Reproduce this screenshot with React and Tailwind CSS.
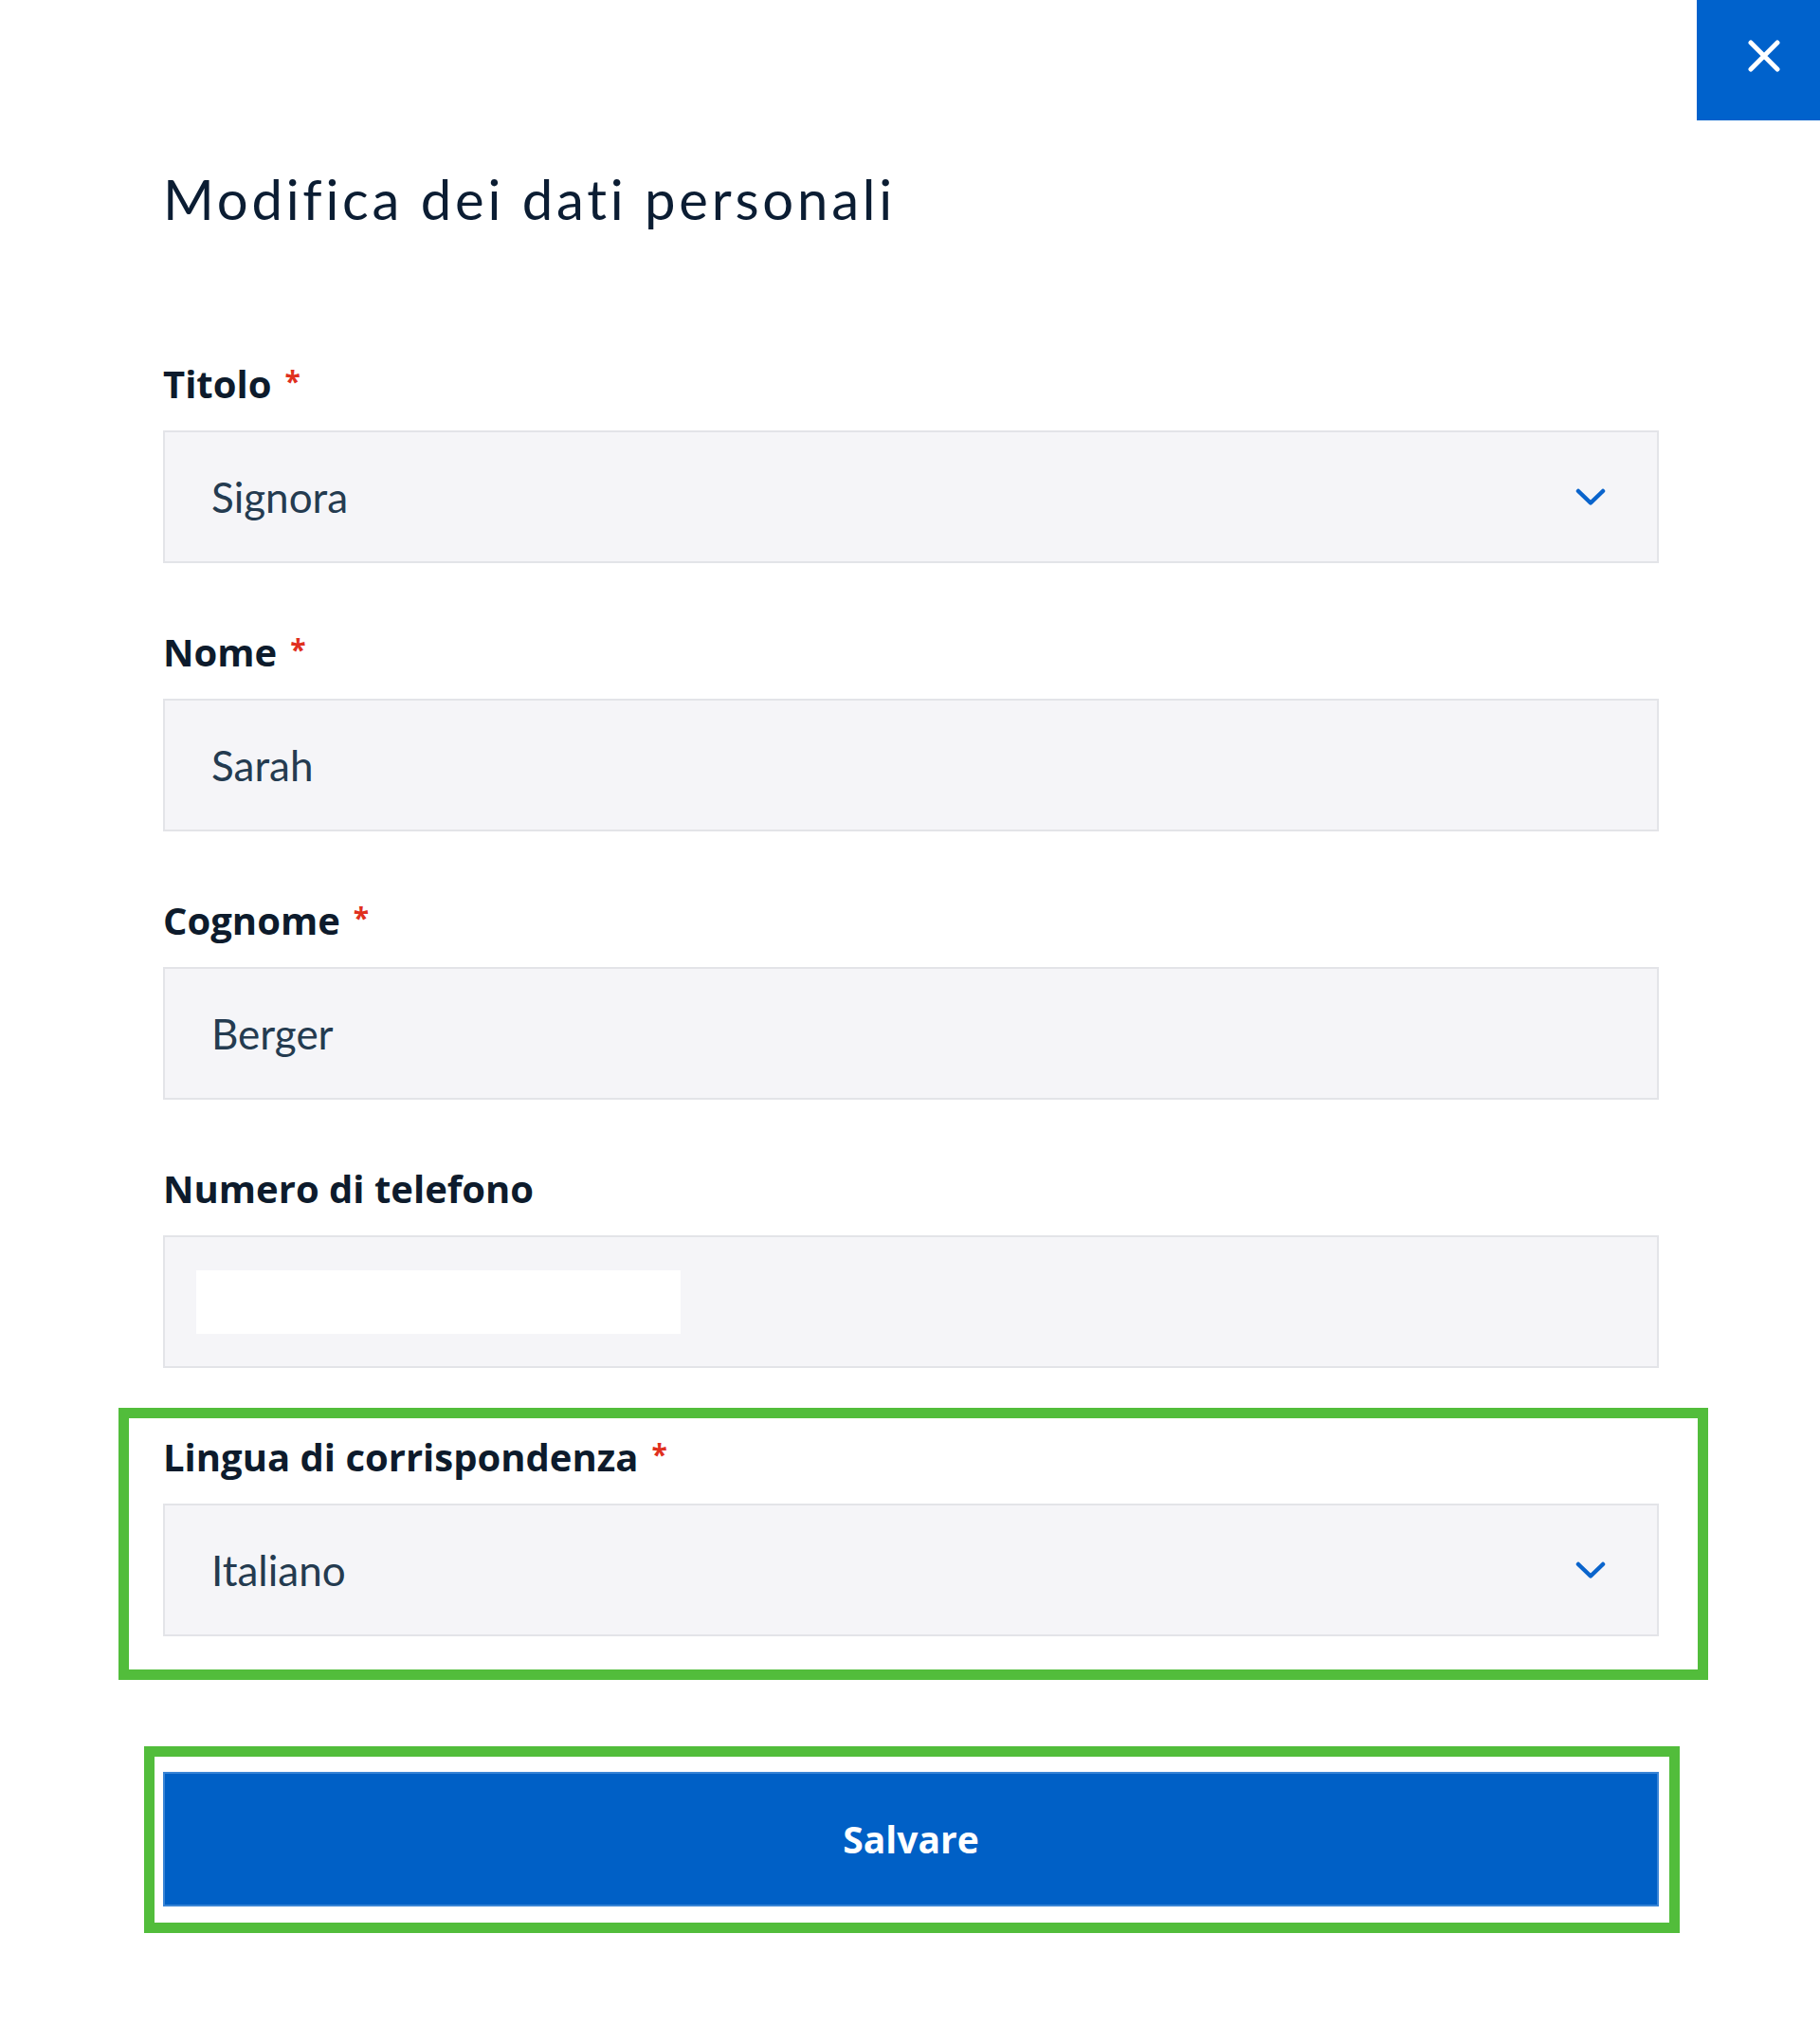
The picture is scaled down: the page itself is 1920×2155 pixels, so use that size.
import React from 'react';

const fields = [
  { label: 'Titolo', value: 'Signora', required: true, select: true },
  { label: 'Nome', value: 'Sarah', required: true },
  { label: 'Cognome', value: 'Berger', required: true },
  { label: 'Numero di telefono', value: '', required: false, phone: true },
];

const Chevron = () => (
  <svg width="32" height="19" viewBox="0 0 32 19" fill="none" className="mr-[54px]">
    <polyline
      points="3,3 16,15.5 29,3"
      stroke="#0a64cc"
      strokeWidth="4.5"
      strokeLinecap="round"
      strokeLinejoin="round"
    />
  </svg>
);

const Label = ({ text, required }) => (
  <div className="mb-[25px] flex items-start pt-[3px] text-[40px] font-bold leading-[48px] text-[#0d1b2c] [font-family:'Open_Sans',sans-serif]">
    <span>{text}</span>
    {required && <span className="ml-[14px] text-[30px] leading-[42px] text-[#e0301e]">*</span>}
  </div>
);

const Field = ({ label, value, required, select, phone }) => (
  <div>
    <Label text={label} required={required} />
    <div className="flex h-[140px] items-center justify-between border-2 border-[#e3e4e8] bg-[#f5f5f8] pl-[49px] text-[44px] text-[#243b50] [font-family:Lato,sans-serif]">
      {phone ? (
        <div className="-ml-[16px] h-[67px] w-[511px] bg-white" />
      ) : (
        <span>{value}</span>
      )}
      {select && <Chevron />}
    </div>
  </div>
);

export default function App() {
  return (
    <div className="relative min-h-[2155px] w-full bg-white">
      {/* close */}
      <button className="absolute right-0 top-0 flex h-[127px] w-[130px] items-center justify-center bg-[#0062cc] pb-[10px] pl-[12px]">
        <svg width="34" height="34" viewBox="0 0 34 34" fill="none">
          <path d="M3 3 L31 31 M31 3 L3 31" stroke="white" strokeWidth="5" strokeLinecap="round" />
        </svg>
      </button>

      <div className="ml-[172px] w-[1578px] pt-[181px]">
        <h1 className="mb-[139px] text-[58px] font-normal leading-[58px] tracking-[0.065em] text-[#0b1d33] [font-family:Lato,sans-serif]">
          Modifica dei dati personali
        </h1>

        <div className="flex flex-col gap-[67px]">
          {fields.map((f) => (
            <Field key={f.label} {...f} />
          ))}

          {/* highlighted field */}
          <div className="relative">
            <div className="pointer-events-none absolute -bottom-[46px] -left-[47px] -right-[52px] -top-[25px] border-[11px] border-[#52bd3b]" />
            <Field label="Lingua di corrispondenza" value="Italiano" required select />
          </div>
        </div>

        <div className="relative mt-[143px]">
          <div className="pointer-events-none absolute -bottom-[28px] -left-[20px] -right-[22px] -top-[27px] border-[11px] border-[#52bd3b]" />
          <button className="flex h-[142px] w-full items-center justify-center border-2 border-[#3a85d6] bg-[#0060c6] text-[39px] font-bold text-white [font-family:'Open_Sans',sans-serif]">
            Salvare
          </button>
        </div>
      </div>
    </div>
  );
}
